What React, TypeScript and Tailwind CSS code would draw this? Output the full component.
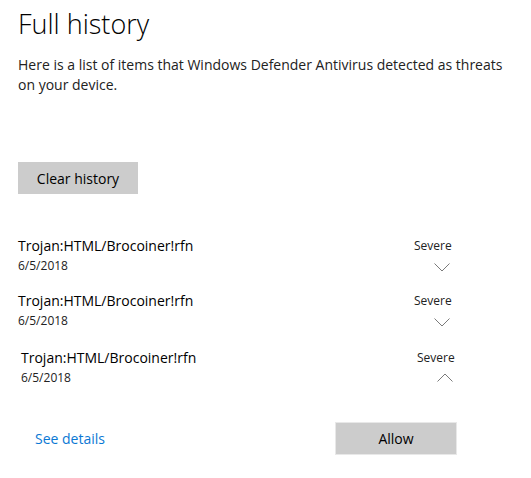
import { ReactNode } from "react";

const FONT = "font-['Open_Sans','Noto_Sans',sans-serif]";

function Chevron({ up }: { up?: boolean }) {
  return (
    <svg width="16" height="9" viewBox="0 0 16 9" className="block">
      <path
        d={up ? "M0.5 8.5 L8 1 L15.5 8.5" : "M0.5 0.5 L8 8 L15.5 0.5"}
        fill="none"
        stroke="#7a7a7a"
        strokeWidth="1"
      />
    </svg>
  );
}

function ThreatRow({
  up,
  indent,
  children,
}: {
  up?: boolean;
  indent?: boolean;
  children?: ReactNode;
}) {
  return (
    <div className={`flex items-start ${indent ? "pl-[3px]" : ""}`}>
      <div className="w-[396px]">
        <div className="text-[14px] leading-[20px] text-black">Trojan:HTML/Brocoiner!rfn</div>
        <div className="text-[12px] leading-[20px] text-[#222]">6/5/2018</div>
      </div>
      <div className="w-[50px]">
        <div className="text-[12px] leading-[20px] text-[#222]">Severe</div>
        <div className={`ml-[20px] ${up ? "mt-[5px]" : "mt-[7px]"}`}>
          <Chevron up={up} />
        </div>
      </div>
      {children}
    </div>
  );
}

export default function App() {
  return (
    <div className={`${FONT} min-h-[478px] bg-white pl-[18px] pt-[5px]`}>
      <h1 className="text-[27px] font-light leading-[38px] text-black">Full history</h1>
      <p className="mt-[12px] w-[500px] text-[14px] leading-[20px] text-[#222]">
        Here is a list of items that Windows Defender Antivirus detected as threats on your device.
      </p>

      <button className="mt-[67px] h-[32px] w-[120px] bg-[#cccccc] text-[14px] text-black">
        Clear history
      </button>

      <div className="mt-[42px] flex flex-col gap-[15px]">
        <ThreatRow />
        <ThreatRow />
        <div className="pt-[2px]">
          <ThreatRow up indent />
        </div>
      </div>

      <div className="mt-[34px] flex items-center pl-[17px]">
        <a className="w-[300px] text-[14px] text-[#0a78d4]" href="#">
          See details
        </a>
        <button className="h-[33px] w-[122px] border border-[#e8e8e8] bg-[#cccccc] text-[14px] text-black">
          Allow
        </button>
      </div>
    </div>
  );
}
